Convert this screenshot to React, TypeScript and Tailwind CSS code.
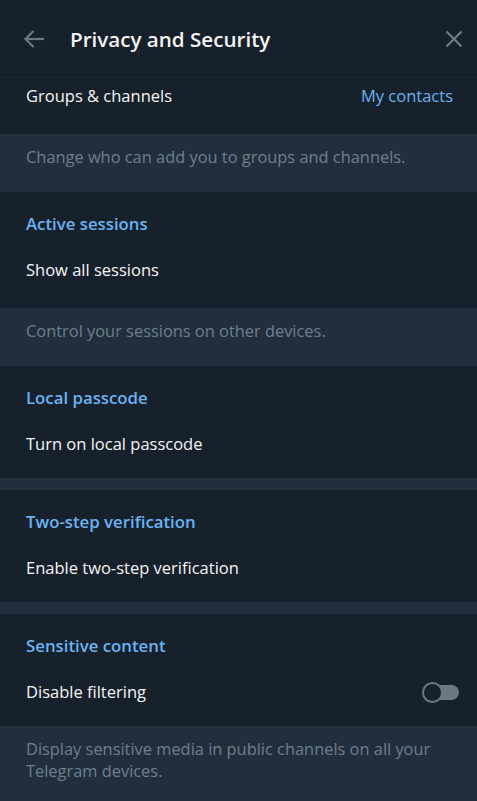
import React from "react";

const font = { fontFamily: '"Open Sans", "Noto Sans", sans-serif' };

function SectionTitle({ children }: { children: React.ReactNode }) {
  return (
    <div className="px-[26px] pt-[21px] pb-[12px] text-[16.8px] leading-[22px] font-semibold text-[#6ab3f3]">
      {children}
    </div>
  );
}

function Row({ children, right }: { children: React.ReactNode; right?: React.ReactNode }) {
  return (
    <div className="h-[46px] pr-[24px] pl-[26px] flex items-center justify-between text-[16.5px] text-[#f5f5f5]">
      <span>{children}</span>
      {right}
    </div>
  );
}

function Footer({ children }: { children: React.ReactNode }) {
  return (
    <div className="bg-[#232e3c] px-[26px] pt-[12px] pb-[24px] text-[16.4px] leading-[22px] text-[#6d7f8f]">
      {children}
    </div>
  );
}

function Toggle() {
  return (
    <div className="relative w-[37px] h-[21px]">
      <div className="absolute left-[8px] right-0 top-[3px] h-[15px] rounded-full bg-[#6c7883]" />
      <div className="absolute left-0 top-0 w-[21px] h-[21px] rounded-full border-[2px] border-[#6c7883] bg-[#17212b]" />
    </div>
  );
}

export default function App() {
  return (
    <div className="w-[477px] h-[801px] overflow-hidden bg-[#17212b] flex flex-col" style={font}>
      {/* Header */}
      <div className="h-[75px] shrink-0 border-b border-[#101921] flex items-center pt-[3px]">
        <div className="w-[70px] flex items-center pl-[23px]">
          <svg width="22" height="20" viewBox="0 0 22 20" fill="none" stroke="#6c7883" strokeWidth="2.2" strokeLinecap="butt">
            <path d="M21 10H2.5" />
            <path d="M10.5 2L2.5 10l8 8" />
          </svg>
        </div>
        <div className="flex-1 text-[20.6px] font-semibold text-[#f5f5f5] leading-[28px]">Privacy and Security</div>
        <div className="pr-[14px] flex items-center">
          <svg width="18" height="18" viewBox="0 0 18 18" fill="none" stroke="#6c7883" strokeWidth="2.4">
            <path d="M1.5 1.5l15 15M16.5 1.5l-15 15" />
          </svg>
        </div>
      </div>

      {/* Groups & channels */}
      <div className="pb-[15px] -mt-[2px]">
        <Row right={<span className="text-[#6ab3f3]">My contacts</span>}>Groups &amp; channels</Row>
      </div>
      <Footer>Change who can add you to groups and channels.</Footer>

      {/* Active sessions */}
      <div className="pb-[15px]">
        <SectionTitle>Active sessions</SectionTitle>
        <Row>Show all sessions</Row>
      </div>
      <Footer>Control your sessions on other devices.</Footer>

      {/* Local passcode */}
      <div className="pb-[11px]">
        <SectionTitle>Local passcode</SectionTitle>
        <Row>Turn on local passcode</Row>
      </div>
      <div className="h-[12px] bg-[#232e3c]" />

      {/* Two-step */}
      <div className="pb-[11px]">
        <SectionTitle>Two-step verification</SectionTitle>
        <Row>Enable two-step verification</Row>
      </div>
      <div className="h-[12px] bg-[#232e3c]" />

      {/* Sensitive content */}
      <div className="pb-[11px]">
        <SectionTitle>Sensitive content</SectionTitle>
        <div className="h-[46px] pl-[26px] pr-[18px] flex items-center justify-between text-[16.5px] text-[#f5f5f5]">
          <span>Disable filtering</span>
          <Toggle />
        </div>
      </div>
      <div className="flex-1 bg-[#232e3c] px-[26px] pt-[12px] text-[16.4px] leading-[22px] text-[#6d7f8f]">
        Display sensitive media in public channels on all your Telegram devices.
      </div>
    </div>
  );
}
